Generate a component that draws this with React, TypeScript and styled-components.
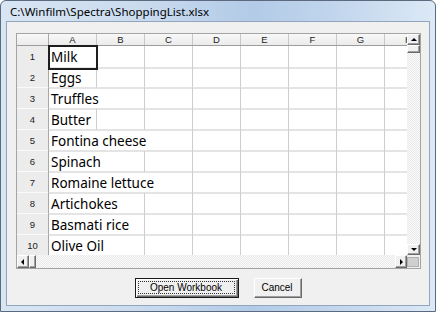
import React from "react";
import styled, { createGlobalStyle, css } from "styled-components";

const GlobalStyle = createGlobalStyle`
  html, body { margin: 0; padding: 0; background: #ffffff; }
  body { width: 436px; height: 312px; overflow: hidden; }
  * { box-sizing: border-box; }
`;

const Window = styled.div`
  width: 436px;
  height: 312px;
  border: 1px solid #5b6a7e;
  border-radius: 6px 6px 0 0;
  background: linear-gradient(90deg, #d8e5f3 0%, #cbdcef 30%, #b3cbe7 58%, #c2d6ed 78%, #dce9f6 100%);
  padding: 0 5px 5px;
  display: flex;
  flex-direction: column;
`;

const TitleBar = styled.div`
  height: 20px;
  display: flex;
  align-items: center;
  padding-left: 4px;
  font-family: "Noto Sans", "DejaVu Sans", sans-serif;
  font-size: 11.5px;
  color: #000;
  white-space: nowrap;
`;

const Client = styled.div`
  flex: 1;
  border: 1px solid #93a5bd;
  background: #f0f0f0;
  display: flex;
  flex-direction: column;
  padding: 11px 8px 0 9px;
`;

const Panel = styled.div`
  width: 405px;
  height: 236px;
  border: 1px solid #a4a4a4;
  background: #ffffff;
  display: grid;
  grid-template-columns: 390px 13px;
  grid-template-rows: 221px 13px;
`;

const Sheet = styled.div`
  overflow: hidden;
  display: flex;
  flex-direction: column;
`;

const Columns = css`
  display: grid;
  grid-template-columns: 32px repeat(8, 48px);
  width: 416px;
  flex: none;
`;

const HeaderRow = styled.div`
  ${Columns};
  height: 12px;
  border-bottom: 1px solid #9d9d9d;
`;

const HeaderCell = styled.div<{ $corner?: boolean }>`
  background: linear-gradient(#f8f8f8, #ebebeb);
  border-right: 1px solid ${(p) => (p.$corner ? "#a8a8a8" : "#c8c8c8")};
  font-family: "Liberation Sans", Arial, sans-serif;
  font-size: 9.5px;
  line-height: 11px;
  color: #222;
  text-align: center;
`;

const Row = styled.div`
  ${Columns};
  height: 21px;
`;

const RowNum = styled.div`
  background: #ececec;
  border-right: 1px solid #a8a8a8;
  border-bottom: 2px solid #fafafa;
  font-family: "Liberation Sans", Arial, sans-serif;
  font-size: 9.5px;
  line-height: 19px;
  padding-top: 1px;
  color: #222;
  text-align: center;
`;

const Cell = styled.div<{ $span?: number; $selected?: boolean }>`
  grid-column: span ${(p) => p.$span ?? 1};
  border-right: 1px solid #cecece;
  border-bottom: 2px solid #e4e4e4;
  font-family: "Noto Sans", "Open Sans", sans-serif;
  font-size: 13.5px;
  line-height: 19px;
  padding: 2px 0 0 2px;
  color: #000;
  white-space: nowrap;
  overflow: hidden;
  position: relative;
  ${(p) =>
    p.$selected &&
    css`
      outline: 2px solid #1e1e1e;
      outline-offset: -1px;
      z-index: 1;
      overflow: visible;
    `}
`;

const track = css`
  background-color: #f7f7f7;
  background-image: repeating-conic-gradient(#e9e9e9 0 25%, #fbfbfb 0 50%);
  background-size: 2px 2px;
`;

const VScroll = styled.div`
  ${track};
  display: flex;
  flex-direction: column;
  justify-content: space-between;
`;

const HScroll = styled.div`
  ${track};
  display: flex;
  justify-content: space-between;
  align-items: stretch;
`;

const ScrollStart = styled.div<{ $vertical?: boolean }>`
  display: flex;
  flex-direction: ${(p) => (p.$vertical ? "column" : "row")};
`;

const bevel = css`
  background: #f0f0f0;
  border: 1px solid;
  border-color: #ffffff #6a6a6a #6a6a6a #ffffff;
  box-shadow: inset -1px -1px #a0a0a0;
`;

const ScrollButton = styled.div<{ $w: number; $h: number }>`
  ${bevel};
  width: ${(p) => p.$w}px;
  height: ${(p) => p.$h}px;
  display: flex;
  align-items: center;
  justify-content: center;
  flex: none;
`;

const Thumb = styled.div<{ $w: number; $h: number }>`
  ${bevel};
  width: ${(p) => p.$w}px;
  height: ${(p) => p.$h}px;
  flex: none;
`;

type Dir = "up" | "down" | "left" | "right";

const Arrow = styled.span<{ $dir: Dir }>`
  width: 0;
  height: 0;
  border-style: solid;
  ${(p) =>
    p.$dir === "up"
      ? css`border-width: 0 3px 3px 3px; border-color: transparent transparent #000 transparent; margin-top: -1px;`
      : p.$dir === "down"
      ? css`border-width: 3px 3px 0 3px; border-color: #000 transparent transparent transparent;`
      : p.$dir === "left"
      ? css`border-width: 3px 3px 3px 0; border-color: transparent #000 transparent transparent; margin-left: -1px;`
      : css`border-width: 3px 0 3px 3px; border-color: transparent transparent transparent #000;`}
`;

const Corner = styled.div`
  background: #f0f0f0;
  padding: 2px 1px 1px 0;
  display: flex;
`;

const CornerBox = styled.div`
  flex: 1;
  background: #cfcfcf;
  border: 1px solid #b0b0b0;
`;

const ButtonRow = styled.div`
  display: flex;
  justify-content: center;
  gap: 15px;
  margin-top: 9px;
  padding-right: 1px;
`;

const Button = styled.button<{ $w: number; $default?: boolean }>`
  width: ${(p) => p.$w}px;
  height: 20px;
  padding: 0;
  font-family: "Liberation Sans", Arial, sans-serif;
  font-size: 10px;
  color: #000;
  background: #f0f0f0;
  display: flex;
  align-items: stretch;
  justify-content: stretch;
  ${(p) =>
    p.$default
      ? css`
          border: 1px solid #1a1a1a;
          box-shadow: inset 1px 1px #ffffff, inset -1px -1px #6a6a6a, inset -2px -2px #a0a0a0;
        `
      : css`
          border: 1px solid;
          border-color: #ffffff #6a6a6a #6a6a6a #ffffff;
          box-shadow: inset -1px -1px #a0a0a0;
        `}
`;

const ButtonLabel = styled.span<{ $focus?: boolean }>`
  flex: 1;
  display: flex;
  align-items: center;
  justify-content: center;
  margin: 2px 3px 3px 2px;
  border: 1px dotted ${(p) => (p.$focus ? "#333" : "transparent")};
`;

const columns = ["A", "B", "C", "D", "E", "F", "G", "H"];

const items: { text: string; span: number }[] = [
  { text: "Milk", span: 1 },
  { text: "Eggs", span: 1 },
  { text: "Truffles", span: 2 },
  { text: "Butter", span: 1 },
  { text: "Fontina cheese", span: 3 },
  { text: "Spinach", span: 2 },
  { text: "Romaine lettuce", span: 3 },
  { text: "Artichokes", span: 2 },
  { text: "Basmati rice", span: 2 },
  { text: "Olive Oil", span: 2 },
];

export default function App() {
  return (
    <>
      <GlobalStyle />
      <Window>
        <TitleBar>{"C:\\Winfilm\\Spectra\\ShoppingList.xlsx"}</TitleBar>
        <Client>
          <Panel>
            <Sheet>
              <HeaderRow>
                <HeaderCell $corner />
                {columns.map((c) => (
                  <HeaderCell key={c}>{c}</HeaderCell>
                ))}
              </HeaderRow>
              {items.map((item, i) => (
                <Row key={item.text}>
                  <RowNum>{i + 1}</RowNum>
                  <Cell $span={item.span} $selected={i === 0}>
                    {item.text}
                  </Cell>
                  {Array.from({ length: 8 - item.span }).map((_, j) => (
                    <Cell key={j} />
                  ))}
                </Row>
              ))}
            </Sheet>
            <VScroll>
              <ScrollStart $vertical>
                <ScrollButton $w={13} $h={11}>
                  <Arrow $dir="up" />
                </ScrollButton>
                <Thumb $w={13} $h={8} />
              </ScrollStart>
              <ScrollButton $w={13} $h={11}>
                <Arrow $dir="down" />
              </ScrollButton>
            </VScroll>
            <HScroll>
              <ScrollStart>
                <ScrollButton $w={12} $h={13}>
                  <Arrow $dir="left" />
                </ScrollButton>
                <Thumb $w={7} $h={13} />
              </ScrollStart>
              <ScrollButton $w={12} $h={13}>
                <Arrow $dir="right" />
              </ScrollButton>
            </HScroll>
            <Corner>
              <CornerBox />
            </Corner>
          </Panel>
          <ButtonRow>
            <Button $w={104} $default>
              <ButtonLabel $focus>Open Workbook</ButtonLabel>
            </Button>
            <Button $w={48}>
              <ButtonLabel>Cancel</ButtonLabel>
            </Button>
          </ButtonRow>
        </Client>
      </Window>
    </>
  );
}
